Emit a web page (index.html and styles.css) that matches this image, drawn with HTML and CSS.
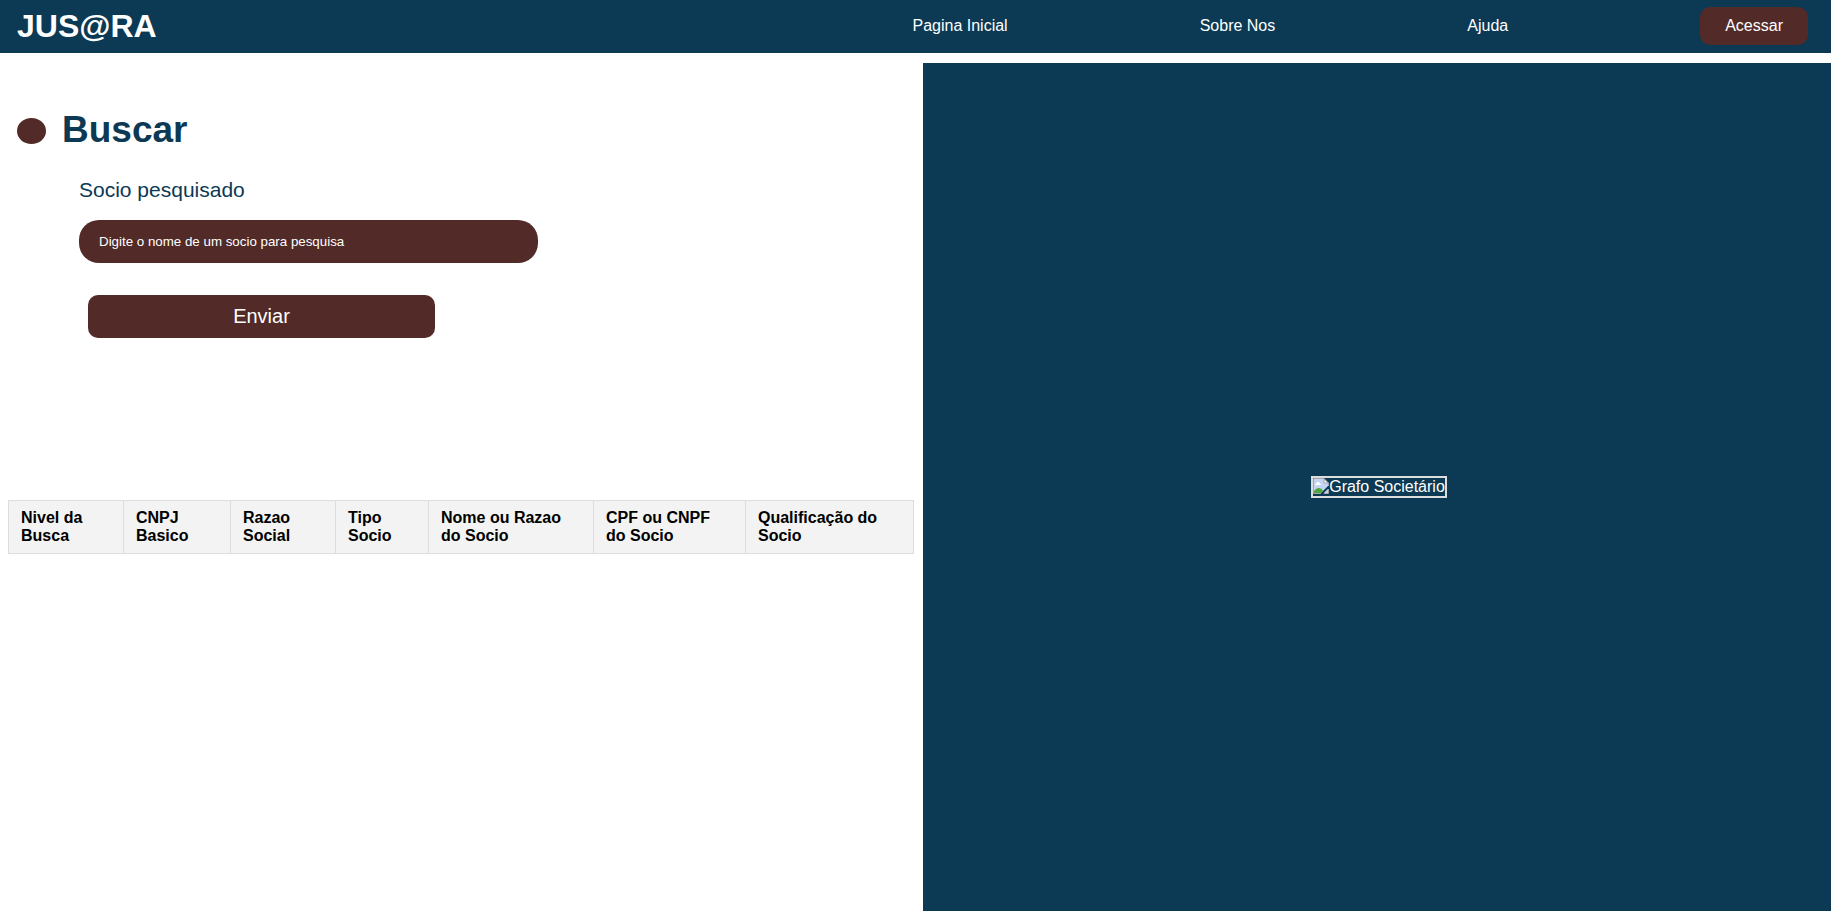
FILE: index.html
```html
<!DOCTYPE html>
<html lang="pt-BR">
<head>
<meta charset="utf-8">
<title>JUS@RA - Buscar</title>
<link rel="stylesheet" href="styles.css">
</head>
<body>
<header class="topbar">
  <div class="logo">JUS@RA</div>
  <nav class="menu">
    <a href="#inicio">Pagina Inicial</a>
    <a href="#sobre">Sobre Nos</a>
    <a href="#ajuda">Ajuda</a>
    <button class="login" type="button">Acessar</button>
  </nav>
</header>
<main class="content">
  <section class="search">
    <div class="title">
      <span class="dot"></span>
      <h1>Buscar</h1>
    </div>
    <form class="form">
      <label for="socio">Socio pesquisado</label>
      <input id="socio" type="text" placeholder="Digite o nome de um socio para pesquisa">
      <button class="send" type="submit">Enviar</button>
    </form>
    <table class="results">
      <colgroup>
        <col class="col-nivel">
        <col class="col-cnpj">
        <col class="col-razao">
        <col class="col-tipo">
        <col class="col-nome">
        <col class="col-cpf">
        <col class="col-qualificacao">
      </colgroup>
      <thead>
        <tr>
          <th>Nivel da Busca</th>
          <th>CNPJ Basico</th>
          <th>Razao Social</th>
          <th>Tipo Socio</th>
          <th>Nome ou Razao do Socio</th>
          <th>CPF ou CNPF do&nbsp;Socio</th>
          <th>Qualificação do Socio</th>
        </tr>
      </thead>
    </table>
  </section>
  <section class="graph">
    <div class="graph-image">
      <svg width="16" height="16" viewBox="0 0 16 16" aria-hidden="true">
        <path d="M1 1h10l4 4v3L8 15H1z" fill="#c3d4f4"/>
        <path d="M3 6a2 2 0 0 1 4 0h1v1H2V6z" fill="#fff"/>
        <path d="M1 15v-2c3-4 7-4 9 0l-2 2z" fill="#4fa63c"/>
        <path d="M11 1v4h4z" fill="#fff"/>
        <path d="M8 15.500H.5V.5H11L15.500 5v3M11 .5V5h4.500M15.500 11v4.500H11z" fill="none" stroke="#a5a5a5"/>
        <path d="M11 15l4-4v4z" fill="#c3d4f4"/>
      </svg>
      <span>Grafo Societário</span>
    </div>
  </section>
</main>
</body>
</html>
```
FILE: styles.css
```css
* {
  box-sizing: border-box;
}

body {
  margin: 0;
  background: #fff;
  color: #000;
  font: 16px/18px "Liberation Sans", Arial, sans-serif;
}

button,
input {
  border: 0;
  background: #522a28;
  color: #fff;
  font-family: inherit;
}

.topbar {
  display: flex;
  align-items: center;
  justify-content: space-between;
  height: 53px;
  padding: 0 23px 0 17px;
  background: #0c3953;
  color: #fff;
}

.logo {
  padding-bottom: 2px;
  font-size: 32px;
  font-weight: bold;
  line-height: 36px;
}

.menu {
  display: flex;
  align-items: center;
  justify-content: space-between;
  width: 50%;
  padding-bottom: 2px;
}

.menu a {
  color: #fff;
  text-decoration: none;
}

.login {
  padding: 10px 25px;
  border-radius: 10px;
  font-size: 16px;
  line-height: 18px;
}

.content {
  display: grid;
  grid-template-columns: 922fr 909fr;
  min-height: calc(100vh - 68px);
  margin: 10px 0 5px;
}

.search {
  padding: 46px 9px 0 8px;
}

.title {
  display: flex;
  align-items: center;
  gap: 16px;
  padding-left: 9px;
}

.title h1 {
  margin: 0;
  color: #0c3953;
  font-size: 37px;
  line-height: 42px;
}

.dot {
  width: 29px;
  height: 26px;
  margin-top: 2px;
  border-radius: 50%;
  background: #522a28;
}

.form {
  display: flex;
  flex-direction: column;
  align-items: flex-start;
  padding: 27px 0 0 71px;
}

.form label {
  margin-bottom: 18px;
  color: #0c3953;
  font-size: 21px;
  line-height: 24px;
}

.form input {
  width: 55%;
  height: 43px;
  padding: 0 20px;
  border-radius: 20px;
}

.form input::placeholder {
  color: #fff;
  opacity: 1;
}

.send {
  width: 347px;
  height: 43px;
  margin: 32px 0 0 9px;
  border-radius: 10px;
  font-size: 20px;
}

.results {
  width: 100%;
  margin-top: 162px;
  border-collapse: collapse;
  table-layout: fixed;
}

.col-nivel {
  width: 115px;
}

.col-cnpj {
  width: 107px;
}

.col-razao {
  width: 105px;
}

.col-tipo {
  width: 93px;
}

.col-nome {
  width: 165px;
}

.col-cpf {
  width: 152px;
}

.col-qualificacao {
  width: 168px;
}

.results th {
  padding: 8px 12px;
  border: 1px solid #ddd;
  background: #f3f3f3;
  text-align: left;
}

.graph {
  display: flex;
  align-items: center;
  justify-content: center;
  padding-left: 4px;
  background: #0c3953;
}

.graph-image {
  display: flex;
  border: 2px solid #ddd;
  color: #fff;
}
```
